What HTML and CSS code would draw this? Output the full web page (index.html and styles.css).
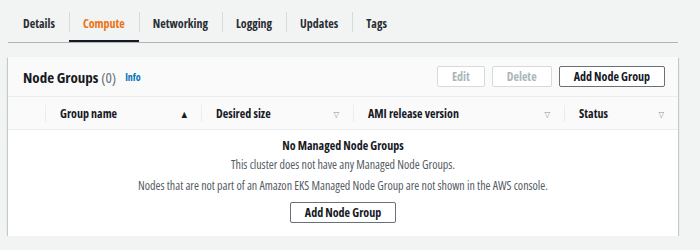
FILE: index.html
```html
<!DOCTYPE html>
<html lang="en">
<head>
    <meta charset="UTF-8">
    <meta name="viewport" content="width=device-width, initial-scale=1.0">
    <title>Compute - Cluster</title>
    <link rel="stylesheet" href="styles.css">
</head>
<body>
    <nav class="tabs">
        <a class="tab" href="#">Details</a>
        <a class="tab active" href="#">Compute</a>
        <a class="tab" href="#">Networking</a>
        <a class="tab" href="#">Logging</a>
        <a class="tab" href="#">Updates</a>
        <a class="tab" href="#">Tags</a>
    </nav>

    <div class="card">
        <div class="card-header">
            <h2>Node Groups <span class="count">(0)</span></h2>
            <a class="info" href="#">Info</a>
            <div class="actions">
                <button class="btn" disabled>Edit</button>
                <button class="btn" disabled>Delete</button>
                <button class="btn">Add Node Group</button>
            </div>
        </div>

        <div class="table-head">
            <div class="col col-select"></div>
            <div class="col">Group name <span class="sort sorted">&#9650;</span></div>
            <div class="col">Desired size <span class="sort">&#9661;</span></div>
            <div class="col">AMI release version <span class="sort">&#9661;</span></div>
            <div class="col">Status <span class="sort">&#9661;</span></div>
        </div>

        <div class="empty">
            <h3>No Managed Node Groups</h3>
            <p>This cluster does not have any Managed Node Groups.</p>
            <p class="note">Nodes that are not part of an Amazon EKS Managed Node Group are not shown in the AWS console.</p>
            <button class="btn">Add Node Group</button>
        </div>
    </div>
</body>
</html>
```

FILE: styles.css
```css
* {
    margin: 0;
    padding: 0;
    box-sizing: border-box;
}

body {
    font-family: "Open Sans", "DejaVu Sans", sans-serif;
    font-stretch: 79%;
    background-color: #f2f3f3;
    color: #16191f;
    padding: 0 22px 0 8px;
}

/* tab bar */
.tabs {
    display: flex;
    height: 43px;
    padding-top: 11px;
    border-bottom: 1px solid #aab7b8;
    margin-bottom: 14px;
}

.tab {
    position: relative;
    display: block;
    height: 31px;
    padding: 4px 14px 0;
    font-size: 12px;
    font-weight: bold;
    font-stretch: 75%;
    color: #2a2e33;
    text-decoration: none;
}

.tab:first-child {
    padding-left: 15px;
}

.tab + .tab::before {
    content: "";
    position: absolute;
    left: 0;
    top: 1px;
    height: 20px;
    border-left: 1px solid #d5dbdb;
}

.tab.active {
    color: #ec7211;
    border-bottom: 2px solid #16191f;
}

/* card */
.card {
    background-color: #ffffff;
    box-shadow: 0 1px 1px 0 rgba(0, 28, 36, 0.3), 1px 1px 1px 0 rgba(0, 28, 36, 0.15), -1px 1px 1px 0 rgba(0, 28, 36, 0.15);
}

.card-header {
    display: flex;
    align-items: center;
    height: 40px;
    padding: 0 13px 0 15px;
    background-color: #fafafa;
    border-bottom: 1px solid #eaeded;
}

.card-header h2 {
    font-size: 15px;
    font-weight: bold;
    font-stretch: 75%;
}

.count {
    font-weight: normal;
    color: #687078;
}

.info {
    margin-left: 9px;
    font-size: 10px;
    font-weight: bold;
    font-stretch: 75%;
    color: #0073bb;
    text-decoration: none;
}

.actions {
    margin-left: auto;
    display: flex;
    gap: 7px;
}

.btn {
    font-family: inherit;
    font-stretch: 75%;
    font-size: 12px;
    font-weight: bold;
    white-space: nowrap;
    height: 21px;
    padding: 0 14px;
    background-color: #ffffff;
    color: #16191f;
    border: 1px solid #687078;
    border-radius: 2px;
    cursor: pointer;
}

.btn:disabled {
    color: #aab7b8;
    border-color: #d5dbdb;
    cursor: default;
}

/* table */
.table-head {
    display: grid;
    grid-template-columns: 37px 156px 152px 211px 1fr;
    height: 33px;
    background-color: #fafafa;
    border-bottom: 1px solid #eaeded;
    align-items: center;
}

.col {
    display: flex;
    align-items: center;
    height: 17px;
    padding: 0 14px;
    border-left: 1px solid #eaeded;
    font-size: 12px;
    font-weight: bold;
    font-stretch: 75%;
}

.col-select {
    border-left: none;
}

.sort {
    margin-left: auto;
    font-size: 8px;
    color: #879596;
}

.sort.sorted {
    color: #16191f;
}

.empty {
    text-align: center;
    padding: 8px 0 13px;
    font-size: 12px;
    line-height: 16px;
    color: #545b64;
}

.empty h3 {
    font-size: 12px;
    font-weight: bold;
    font-stretch: 75%;
    color: #16191f;
    margin-bottom: 3px;
}

.empty p {
    margin-bottom: 5px;
}

.empty .note {
    margin-bottom: 8px;
}
```
